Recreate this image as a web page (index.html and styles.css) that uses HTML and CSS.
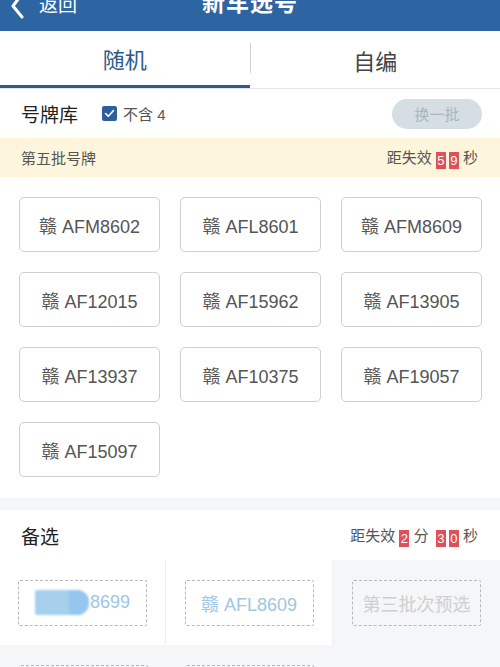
FILE: index.html
```html
<!DOCTYPE html>
<html lang="zh-CN">

<head>
    <meta charset="UTF-8">
    <meta name="viewport" content="width=device-width, initial-scale=1.0">
    <title>新车选号</title>
    <link rel="stylesheet" href="styles.css">
</head>

<body>
    <div class="topbar">
        <div class="back">
            <svg class="back-icon" width="16" height="30" viewBox="0 0 16 30">
                <path d="M12 -6 L3 6 L12 17" fill="none" stroke="#fff" stroke-width="3" stroke-linecap="round" stroke-linejoin="round" />
            </svg>
            <span>返回</span>
        </div>
        <div class="title">新车选号</div>
        <div></div>
    </div>

    <div class="tabs">
        <div class="tab active">随机</div>
        <div class="tab-divider"></div>
        <div class="tab">自编</div>
    </div>

    <div class="toolbar">
        <span class="section-title">号牌库</span>
        <label class="check">
            <span class="check-box">
                <svg width="11" height="11" viewBox="0 0 11 11">
                    <path d="M1.5 5.5 L4.3 8.3 L9.5 2.5" fill="none" stroke="#fff" stroke-width="1.6" stroke-linecap="round" stroke-linejoin="round" />
                </svg>
            </span>
            不含 4
        </label>
        <button class="refresh">换一批</button>
    </div>

    <div class="notice">
        <span>第五批号牌</span>
        <span class="timer">距失效 <b class="digit">5</b><b class="digit">9</b> 秒</span>
    </div>

    <div class="plates">
        <div class="plate">赣 AFM8602</div>
        <div class="plate">赣 AFL8601</div>
        <div class="plate">赣 AFM8609</div>
        <div class="plate">赣 AF12015</div>
        <div class="plate">赣 AF15962</div>
        <div class="plate">赣 AF13905</div>
        <div class="plate">赣 AF13937</div>
        <div class="plate">赣 AF10375</div>
        <div class="plate">赣 AF19057</div>
        <div class="plate">赣 AF15097</div>
    </div>

    <div class="gap-band"></div>

    <div class="section-head">
        <span class="section-title">备选</span>
        <span class="timer">距失效 <b class="digit">2</b> 分 <b class="digit">3</b><b class="digit">0</b> 秒</span>
    </div>

    <div class="picks">
        <div class="pick-cell filled">
            <div class="pick-box blue"><span class="blur"><i></i></span>8699</div>
        </div>
        <div class="pick-cell filled">
            <div class="pick-box blue">赣 AFL8609</div>
        </div>
        <div class="pick-cell">
            <div class="pick-box empty">第三批次预选</div>
        </div>
        <div class="pick-cell">
            <div class="pick-box empty"></div>
        </div>
        <div class="pick-cell">
            <div class="pick-box empty"></div>
        </div>
        <div class="pick-cell"></div>
    </div>
</body>

</html>
```

FILE: styles.css
```css
body {
    margin: 0;
    font-family: "Liberation Sans", "Noto Sans CJK SC", sans-serif;
    background-color: #fff;
    color: #333;
    overflow: hidden;
}

.topbar {
    height: 31px;
    background-color: #2d64a2;
    color: #fff;
    display: grid;
    grid-template-columns: 1fr auto 1fr;
    align-items: start;
    overflow: hidden;
}

.back {
    display: flex;
    align-items: flex-start;
    font-size: 19px;
    line-height: 19px;
    margin-top: -4px;
}

.back-icon {
    margin: 4px 0 0 10px;
}

.back span {
    margin-left: 13px;
}

.title {
    font-size: 23px;
    line-height: 23px;
    font-weight: bold;
    margin-top: -8px;
    letter-spacing: 1px;
}

.tabs {
    display: flex;
    align-items: center;
    height: 57px;
    border-bottom: 1px solid #e4e6e8;
}

.tab {
    flex: 1;
    height: 100%;
    box-sizing: border-box;
    display: flex;
    align-items: center;
    justify-content: center;
    font-size: 22px;
    color: #444;
}

.tab.active {
    color: #2c5a8c;
    border-bottom: 3px solid #2d5b8e;
}

.tab-divider {
    width: 1px;
    height: 30px;
    background-color: #d2d2d2;
    margin-bottom: 3px;
}

.toolbar {
    height: 49px;
    display: flex;
    align-items: center;
    padding: 0 18px 0 21px;
}

.section-title {
    font-size: 19px;
    color: #222;
}

.check {
    display: flex;
    align-items: center;
    margin-left: 24px;
    font-size: 15px;
    color: #555;
}

.check-box {
    width: 15px;
    height: 15px;
    border-radius: 2px;
    background-color: #2d5f9c;
    display: flex;
    align-items: center;
    justify-content: center;
    margin-right: 6px;
}

.refresh {
    margin-left: auto;
    width: 90px;
    height: 30px;
    border: none;
    border-radius: 15px;
    background-color: #d4dee3;
    color: #a8b6bc;
    font-family: inherit;
    font-size: 15px;
}

.notice {
    height: 39px;
    background-color: #fdf5dc;
    display: flex;
    align-items: center;
    justify-content: space-between;
    padding: 0 22px 0 21px;
    font-size: 15px;
    color: #555;
}

.timer {
    font-size: 15px;
    color: #555;
    white-space: pre;
}

.digit {
    display: inline-block;
    width: 10px;
    height: 17px;
    line-height: 17px;
    text-align: center;
    vertical-align: -2px;
    background-color: #e05058;
    color: #fff;
    font-weight: normal;
    font-size: 13px;
}

.digit + .digit {
    margin-left: 3px;
}

.plates {
    display: grid;
    grid-template-columns: repeat(3, 141px);
    grid-auto-rows: 55px;
    gap: 20px;
    padding: 20px 0 21px 19px;
}

.plate {
    border: 1px solid #cfcfcf;
    border-radius: 5px;
    display: flex;
    align-items: center;
    justify-content: center;
    font-size: 18px;
    color: #555;
}

.gap-band {
    height: 12px;
    background-color: #f4f6f7;
}

.section-head {
    height: 50px;
    display: flex;
    align-items: center;
    justify-content: space-between;
    padding: 0 22px 0 21px;
}

.picks {
    display: grid;
    grid-template-columns: 166px 167px 167px;
    grid-auto-rows: 85px;
    background-color: #f4f6f7;
}

.pick-cell {
    display: flex;
    align-items: center;
    justify-content: center;
}

.pick-cell.filled {
    background-color: #fff;
    border-right: 1px solid #eef0f1;
}

.pick-box {
    width: 129px;
    height: 46px;
    box-sizing: border-box;
    border: 1.5px dashed #b8b8b8;
    border-radius: 2px;
    display: flex;
    align-items: center;
    justify-content: center;
    font-size: 18px;
}

.pick-box.blue {
    color: #9fc6e2;
}

.pick-box.empty {
    color: #cfcfcf;
}

.blur {
    display: inline-block;
    width: 54px;
    height: 25px;
    background-color: #a6cfee;
    border-radius: 2px 12px 12px 2px;
    filter: blur(1px);
    position: relative;
    margin-right: 1px;
}

.blur i {
    position: absolute;
    right: 0;
    top: 0;
    width: 20px;
    height: 25px;
    border-radius: 0 12px 12px 0;
    background-color: #94c6ee;
}
```
